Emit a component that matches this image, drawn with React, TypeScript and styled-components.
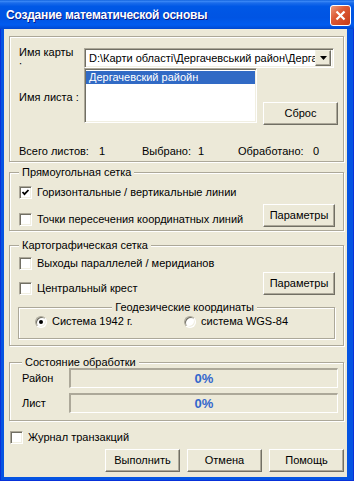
import styled, { createGlobalStyle } from "styled-components";

const GlobalStyle = createGlobalStyle`
  html, body {
    margin: 0;
    padding: 0;
    background: #ffffff;
  }
  body {
    font-family: "Liberation Sans", Arial, sans-serif;
    font-size: 11px;
    color: #000;
  }
`;

const WindowFrame = styled.div`
  width: 354px;
  height: 481px;
  box-sizing: border-box;
  display: flex;
  flex-direction: column;
  background: #0554e2;
  border-left: 1px solid #0831d9;
  border-right: 1px solid #0831d9;
  border-bottom: 1px solid #0831d9;
`;

const TitleBar = styled.div`
  height: 29px;
  flex: none;
  display: flex;
  align-items: flex-start;
  justify-content: space-between;
  padding: 0 3px 0 6px;
  margin: 0 -1px;
  background: linear-gradient(
    180deg,
    #0a5bd9 0%,
    #3d8af7 4%,
    #1b6ceb 10%,
    #0058e6 22%,
    #0054e3 60%,
    #005bef 86%,
    #0047d0 100%
  );
`;

const Title = styled.div`
  margin-top: 7px;
  color: #fff;
  font-family: "Liberation Sans", Arial, sans-serif;
  font-weight: bold;
  font-size: 12px;
  letter-spacing: -0.2px;
  line-height: 17px;
  text-shadow: 1px 1px 0 #0a1883;
`;

const CloseButton = styled.div`
  margin-top: 5px;
  width: 21px;
  height: 21px;
  box-sizing: border-box;
  border: 1px solid #fff;
  border-radius: 3px;
  background: linear-gradient(135deg, #ec9b7d 0%, #dd5a35 40%, #c63b16 100%);
  display: flex;
  align-items: center;
  justify-content: center;
`;

const Body = styled.div`
  flex: 1;
  margin: 0 6px 3px 3px;
  background: #ece9d8;
  display: flex;
  flex-direction: column;
  padding: 7px 3px 0 5px;
`;

const Group = styled.div<{ $mt: number; $h: number; $pad: string }>`
  margin-top: ${(p) => p.$mt}px;
  height: ${(p) => p.$h}px;
  box-sizing: border-box;
  padding: ${(p) => p.$pad};
  border: 1px solid #aca899;
  box-shadow: inset 1px 1px 0 #fff, 1px 1px 0 #fff;
  display: flex;
  flex-direction: column;
`;

const Legend = styled.div<{ $center?: boolean }>`
  align-self: ${(p) => (p.$center ? "center" : "flex-start")};
  margin-top: -7px;
  padding: 0 3px;
  height: 13px;
  line-height: 13px;
  background: #ece9d8;
  white-space: nowrap;
`;

const FieldRow = styled.div<{ $mt?: number }>`
  display: flex;
  align-items: flex-start;
  margin-top: ${(p) => p.$mt || 0}px;
`;

const FieldLabel = styled.div<{ $clip?: boolean; $mt?: number }>`
  width: 65px;
  flex: none;
  line-height: 13px;
  margin-top: ${(p) => p.$mt || 0}px;
  ${(p) => (p.$clip ? "height: 19px; overflow: hidden;" : "")}
`;

const sunken = `
  box-sizing: border-box;
  border: 1px solid;
  border-color: #aca899 #fff #fff #aca899;
  box-shadow: inset 1px 1px 0 #716f64, inset -1px -1px 0 #f1efe2;
`;

const Combo = styled.div`
  ${sunken}
  margin-top: 2px;
  width: 250px;
  height: 20px;
  background: #fff;
  display: flex;
  align-items: center;
  padding: 2px;
`;

const ComboText = styled.div`
  flex: 1;
  overflow: hidden;
  white-space: nowrap;
  padding-left: 2px;
  line-height: 14px;
`;

const DropButton = styled.div`
  flex: none;
  width: 16px;
  height: 16px;
  box-sizing: border-box;
  background: #ece9d8;
  border: 1px solid;
  border-color: #f1efe2 #716f64 #716f64 #f1efe2;
  box-shadow: inset -1px -1px 0 #aca899;
  display: flex;
  align-items: center;
  justify-content: center;
`;

const ListBox = styled.div`
  ${sunken}
  width: 173px;
  height: 55px;
  background: #fff;
  padding: 2px 1px;
`;

const ListItem = styled.div<{ $selected?: boolean }>`
  height: 13px;
  line-height: 13px;
  padding-left: 3px;
  white-space: nowrap;
  background: ${(p) => (p.$selected ? "#316ac5" : "transparent")};
  color: ${(p) => (p.$selected ? "#fff" : "#000")};
`;

const Button = styled.div<{ $w: number; $mt?: number; $ml?: number }>`
  flex: none;
  width: ${(p) => p.$w}px;
  height: 23px;
  margin-top: ${(p) => p.$mt || 0}px;
  margin-left: ${(p) => p.$ml || 0}px;
  box-sizing: border-box;
  background: #ece9d8;
  border: 1px solid;
  border-color: #fff #716f64 #716f64 #fff;
  box-shadow: inset -1px -1px 0 #aca899;
  display: flex;
  align-items: center;
  justify-content: center;
  line-height: 13px;
`;

const Stats = styled.div`
  margin-top: 20px;
  display: grid;
  grid-template-columns: 80px 43px 56px 40px 75px 1fr;
  line-height: 13px;
  white-space: nowrap;
`;

const OptionsRow = styled.div<{ $mt: number }>`
  display: flex;
  justify-content: space-between;
  align-items: flex-start;
  margin-top: ${(p) => p.$mt}px;
`;

const OptionColumn = styled.div<{ $gap: number }>`
  display: flex;
  flex-direction: column;
  gap: ${(p) => p.$gap}px;
`;

const CheckRow = styled.div<{ $ml?: number }>`
  display: flex;
  align-items: center;
  gap: 5px;
  height: 13px;
  line-height: 13px;
  white-space: nowrap;
  margin-left: ${(p) => p.$ml || 0}px;
`;

const CheckBox = styled.span`
  ${sunken}
  flex: none;
  width: 13px;
  height: 13px;
  background: #fff;
  display: inline-flex;
  align-items: center;
  justify-content: center;
`;

const SubGroup = styled.div`
  margin: 12px 0 0 -1px;
  height: 32px;
  box-sizing: border-box;
  border: 1px solid #aca899;
  box-shadow: inset 1px 1px 0 #fff, 1px 1px 0 #fff;
  display: flex;
  flex-direction: column;
  padding: 0 0 0 16px;
`;

const RadioGrid = styled.div`
  margin-top: 1px;
  display: grid;
  grid-template-columns: 149px 1fr;
`;

const RadioRow = styled.div`
  display: flex;
  align-items: center;
  gap: 5px;
  height: 13px;
  line-height: 13px;
  white-space: nowrap;
`;

const Radio = styled.span`
  flex: none;
  width: 12px;
  height: 12px;
  box-sizing: border-box;
  border-radius: 50%;
  background: #fff;
  border: 1px solid;
  border-color: #aca899 #fff #fff #aca899;
  box-shadow: inset 1px 1px 0 #716f64, inset -1px -1px 0 #f1efe2;
  display: inline-flex;
  align-items: center;
  justify-content: center;
`;

const RadioDot = styled.span`
  width: 4px;
  height: 4px;
  border-radius: 50%;
  background: #000;
`;

const ProgressRow = styled.div<{ $mt: number }>`
  display: flex;
  align-items: center;
  margin-top: ${(p) => p.$mt}px;
`;

const ProgressLabel = styled.div`
  width: 47px;
  flex: none;
  line-height: 13px;
`;

const ProgressBar = styled.div`
  width: 269px;
  height: 20px;
  box-sizing: border-box;
  border-style: solid;
  border-width: 2px 1px 1px 2px;
  border-color: #aca899 #fff #fff #aca899;
  background: #ece9d8;
  display: flex;
  align-items: center;
  justify-content: center;
  color: #3366cc;
  font-weight: bold;
  font-size: 13px;
`;

const FooterCheck = styled(CheckRow)`
  margin-top: 10px;
  margin-left: 1px;
`;

const ButtonBar = styled.div`
  margin-top: 5px;
  display: flex;
  justify-content: flex-end;
  gap: 7px;
`;

function Check({ label, checked, ml }: { label: string; checked?: boolean; ml?: number }) {
  return (
    <CheckRow $ml={ml}>
      <CheckBox>
        {checked && (
          <svg width="9" height="9" viewBox="0 0 9 9">
            <polyline points="1.5,4 3.5,6.2 7.5,2" fill="none" stroke="#000" strokeWidth="1.8" />
          </svg>
        )}
      </CheckBox>
      {label}
    </CheckRow>
  );
}

export default function App() {
  return (
    <>
      <GlobalStyle />
      <WindowFrame>
        <TitleBar>
          <Title>Создание математической основы</Title>
          <CloseButton>
            <svg width="11" height="11" viewBox="0 0 11 11">
              <path d="M1.5 1.5 L9.5 9.5 M9.5 1.5 L1.5 9.5" stroke="#fff" strokeWidth="2.2" />
            </svg>
          </CloseButton>
        </TitleBar>
        <Body>
          <Group $mt={0} $h={126} $pad="9px 0 0 9px">
            <FieldRow>
              <FieldLabel $clip>
                Имя карты
                <br />:
              </FieldLabel>
              <Combo>
                <ComboText>D:\Карти області\Дергачевський район\Дергачевський</ComboText>
                <DropButton>
                  <svg width="7" height="4" viewBox="0 0 7 4">
                    <path d="M0 0 H7 L3.5 4 Z" fill="#000" />
                  </svg>
                </DropButton>
              </Combo>
            </FieldRow>
            <FieldRow>
              <FieldLabel $mt={23}>Имя листа :</FieldLabel>
              <ListBox>
                <ListItem $selected>Дергачевский райойн</ListItem>
              </ListBox>
              <Button $w={75} $mt={34} $ml={6}>
                Сброс
              </Button>
            </FieldRow>
            <Stats>
              <span>Всего листов:</span>
              <span>1</span>
              <span>Выбрано:</span>
              <span>1</span>
              <span>Обработано:</span>
              <span>0</span>
            </Stats>
          </Group>

          <Group $mt={10} $h={59} $pad="0 8px 0 9px">
            <Legend>Прямоугольная сетка</Legend>
            <OptionsRow $mt={7}>
              <OptionColumn $gap={14}>
                <Check label="Горизонтальные / вертикальные линии" checked />
                <Check label="Точки пересечения координатных линий" />
              </OptionColumn>
              <Button $w={72} $mt={18}>
                Параметры
              </Button>
            </OptionsRow>
          </Group>

          <Group $mt={14} $h={101} $pad="0 8px 0 9px">
            <Legend>Картографическая сетка</Legend>
            <OptionsRow $mt={5}>
              <OptionColumn $gap={12}>
                <Check label="Выходы параллелей / меридианов" />
                <Check label="Центральный крест" />
              </OptionColumn>
              <Button $w={72} $mt={15}>
                Параметры
              </Button>
            </OptionsRow>
            <SubGroup>
              <Legend $center>Геодезические координаты</Legend>
              <RadioGrid>
                <RadioRow>
                  <Radio>
                    <RadioDot />
                  </Radio>
                  Система 1942 г.
                </RadioRow>
                <RadioRow>
                  <Radio />
                  система WGS-84
                </RadioRow>
              </RadioGrid>
            </SubGroup>
          </Group>

          <Group $mt={16} $h={59} $pad="0 5px 0 12px">
            <Legend>Состояние обработки</Legend>
            <ProgressRow $mt={-1}>
              <ProgressLabel>Район</ProgressLabel>
              <ProgressBar>0%</ProgressBar>
            </ProgressRow>
            <ProgressRow $mt={5}>
              <ProgressLabel>Лист</ProgressLabel>
              <ProgressBar>0%</ProgressBar>
            </ProgressRow>
          </Group>

          <FooterCheck>
            <CheckBox />
            Журнал транзакций
          </FooterCheck>

          <ButtonBar>
            <Button $w={75}>Выполнить</Button>
            <Button $w={75}>Отмена</Button>
            <Button $w={75}>Помощь</Button>
          </ButtonBar>
        </Body>
      </WindowFrame>
    </>
  );
}
